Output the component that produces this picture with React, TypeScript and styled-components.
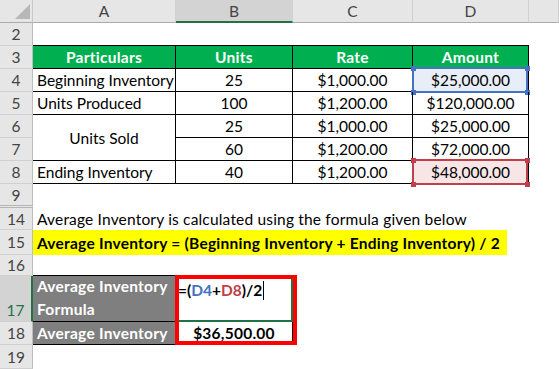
import React from 'react';
import styled, { createGlobalStyle } from 'styled-components';

const GlobalStyle = createGlobalStyle`
  html, body {
    margin: 0;
    padding: 0;
    background: #fff;
    overflow: hidden;
  }
  body {
    font-family: Lato, "Liberation Sans", sans-serif;
  }
`;

const GREEN = '#00b050';
const GREY = '#7f7f7f';
const EXCEL = '#217346';
const BLUE = '#4472c4';
const RED = '#c0404a';

// row heights of the visible sheet rows (header, 2..9, 14..19)
const ROWS = [23, 23, 23, 23, 23, 23, 23, 23, 24, 22, 25, 21, 46, 23, 24];

const Sheet = styled.div`
  display: grid;
  grid-template-columns: 33px 143px 117px 120px 116px 1fr;
  grid-template-rows: ${ROWS.map((h) => `${h}px`).join(' ')};
  width: 559px;
  height: 369px;
  font-size: 15.5px;
  color: #000;
`;

const Corner = styled.div`
  position: relative;
  box-sizing: border-box;
  background: #e6e6e6;
  border-right: 1px solid #c8c8c8;
  border-bottom: 1px solid #ababab;
`;

const CornerMark = styled.svg`
  position: absolute;
  right: 2px;
  bottom: 3px;
`;

const ColHead = styled.div<{ $active?: boolean }>`
  box-sizing: border-box;
  display: flex;
  align-items: center;
  justify-content: center;
  background: ${(p) => (p.$active ? '#d3d3d3' : '#e6e6e6')};
  color: #444;
  border-right: 1px solid #d0d0d0;
  border-bottom: ${(p) => (p.$active ? `2px solid ${EXCEL}` : '1px solid #ababab')};
`;

const RowHead = styled.div<{ $active?: boolean; $gap?: boolean }>`
  box-sizing: border-box;
  display: flex;
  justify-content: center;
  align-items: ${(p) => (p.$active ? 'flex-end' : 'center')};
  background: ${(p) => (p.$active ? '#d3d3d3' : '#e6e6e6')};
  color: ${(p) => (p.$active ? EXCEL : '#444')};
  line-height: 22px;
  border-right: ${(p) => (p.$active ? `2px solid ${EXCEL}` : '1px solid #bdbdbd')};
  border-bottom: ${(p) => (p.$gap ? '3px double #b5b5b5' : '1px solid #d0d0d0')};
`;

type CellProps = {
  $align?: 'left' | 'center';
  $bold?: boolean;
  $fill?: string;
  $ink?: string;
  $box?: boolean;
  $under?: string;
  $span?: number;
  $rows?: number;
};

const Cell = styled.div<CellProps>`
  position: relative;
  box-sizing: border-box;
  display: flex;
  align-items: center;
  justify-content: ${(p) => (p.$align === 'center' ? 'center' : 'flex-start')};
  padding: 0 4px;
  white-space: nowrap;
  grid-column: span ${(p) => p.$span || 1};
  grid-row: span ${(p) => p.$rows || 1};
  font-weight: ${(p) => (p.$bold ? 700 : 400)};
  letter-spacing: ${(p) => (p.$bold ? '0.25px' : 'normal')};
  background: ${(p) => p.$fill || 'transparent'};
  color: ${(p) => p.$ink || '#000'};
  border-right: ${(p) => (p.$box ? '1px solid #000' : 'none')};
  border-bottom: ${(p) => (p.$box ? '1px solid #000' : p.$under ? `1px solid ${p.$under}` : 'none')};
`;

const WrapCell = styled(Cell)`
  white-space: normal;
  align-items: flex-end;
  line-height: 23px;
`;

const ActiveCell = styled(Cell)`
  align-items: flex-start;
  padding: 5px 2px 0;
  letter-spacing: normal;
  border-right: 2px solid ${EXCEL};
  border-bottom: 2px solid ${EXCEL};
`;

const Note = styled.span`
  letter-spacing: 0.18px;
`;

const Highlight = styled.span`
  display: flex;
  align-items: center;
  align-self: stretch;
  background: #ffff00;
  font-weight: 700;
  letter-spacing: 0.25px;
  margin-left: -4px;
  padding: 0 7px 0 4px;
`;

const Picked = styled.div<{ $tone: string; $tint: string }>`
  position: absolute;
  top: -2px;
  left: -1px;
  right: 0;
  bottom: -2px;
  border: 2px solid ${(p) => p.$tone};
  background: ${(p) => p.$tint};
`;

const Handle = styled.i<{ $tone: string; $x: 'left' | 'right'; $y: 'top' | 'bottom' }>`
  position: absolute;
  width: 5px;
  height: 5px;
  background: ${(p) => p.$tone};
  ${(p) => p.$x}: -3.5px;
  ${(p) => p.$y}: -3.5px;
`;

const Value = styled.span`
  position: relative;
`;

const RedFrame = styled.div`
  position: absolute;
  left: -1px;
  top: -1px;
  width: 122px;
  height: 70px;
  box-sizing: border-box;
  border: 4px solid #ff0000;
  pointer-events: none;
  z-index: 2;
`;

const Ref = styled.span<{ $tone: string }>`
  color: ${(p) => p.$tone};
`;

const Caret = styled.span`
  display: inline-block;
  width: 1px;
  height: 19px;
  background: #000;
  margin-left: 1px;
  vertical-align: -4px;
`;

function Selected({ tone, tint, children }: { tone: string; tint: string; children: React.ReactNode }) {
  return (
    <>
      <Picked $tone={tone} $tint={tint}>
        <Handle $tone={tone} $x="left" $y="top" />
        <Handle $tone={tone} $x="right" $y="top" />
        <Handle $tone={tone} $x="left" $y="bottom" />
        <Handle $tone={tone} $x="right" $y="bottom" />
      </Picked>
      <Value>{children}</Value>
    </>
  );
}

const items = [
  { n: 4, name: 'Beginning Inventory', units: '25', rate: '$1,000.00', amount: '$25,000.00' },
  { n: 5, name: 'Units Produced', units: '100', rate: '$1,200.00', amount: '$120,000.00' },
];

export default function App() {
  return (
    <>
      <GlobalStyle />
      <Sheet>
        <Corner>
          <CornerMark width="15" height="15" viewBox="0 0 15 15">
            <polygon points="15,0 15,15 0,15" fill="#b7b7b7" />
          </CornerMark>
        </Corner>
        <ColHead>A</ColHead>
        <ColHead $active>B</ColHead>
        <ColHead>C</ColHead>
        <ColHead>D</ColHead>
        <ColHead />

        <RowHead>2</RowHead>
        <Cell $span={4} $under="#000" />
        <Cell />

        <RowHead>3</RowHead>
        {['Particulars', 'Units', 'Rate', 'Amount'].map((t) => (
          <Cell key={t} $box $bold $fill={GREEN} $ink="#fff" $align="center">
            {t}
          </Cell>
        ))}
        <Cell />

        {items.map((it) => (
          <React.Fragment key={it.n}>
            <RowHead>{it.n}</RowHead>
            <Cell $box>{it.name}</Cell>
            <Cell $box $align="center">{it.units}</Cell>
            <Cell $box $align="center">{it.rate}</Cell>
            <Cell $box $align="center">
              {it.n === 4 ? (
                <Selected tone={BLUE} tint="#e8eef8">{it.amount}</Selected>
              ) : (
                it.amount
              )}
            </Cell>
            <Cell />
          </React.Fragment>
        ))}

        <RowHead>6</RowHead>
        <Cell $box $align="center" $rows={2}>Units Sold</Cell>
        <Cell $box $align="center">25</Cell>
        <Cell $box $align="center">$1,000.00</Cell>
        <Cell $box $align="center">$25,000.00</Cell>
        <Cell />

        <RowHead>7</RowHead>
        <Cell $box $align="center">60</Cell>
        <Cell $box $align="center">$1,200.00</Cell>
        <Cell $box $align="center">$72,000.00</Cell>
        <Cell />

        <RowHead>8</RowHead>
        <Cell $box>Ending Inventory</Cell>
        <Cell $box $align="center">40</Cell>
        <Cell $box $align="center">$1,200.00</Cell>
        <Cell $box $align="center">
          <Selected tone={RED} tint="#f8e6e7">$48,000.00</Selected>
        </Cell>
        <Cell />

        <RowHead $gap>9</RowHead>
        <Cell $span={5} />

        <RowHead>14</RowHead>
        <Cell $span={5}>
          <Note>Average Inventory is calculated using the formula given below</Note>
        </Cell>

        <RowHead>15</RowHead>
        <Cell $span={5}>
          <Highlight>Average Inventory = (Beginning Inventory + Ending Inventory) / 2</Highlight>
        </Cell>

        <RowHead>16</RowHead>
        <Cell $span={2} $under="#000" />
        <Cell $span={3} />

        <RowHead $active>17</RowHead>
        <WrapCell $box $bold $fill={GREY} $ink="#fff">
          Average Inventory Formula
        </WrapCell>
        <ActiveCell $bold>
          <span>
            =(<Ref $tone={BLUE}>D4</Ref>+<Ref $tone={RED}>D8</Ref>)/2
            <Caret />
          </span>
          <RedFrame />
        </ActiveCell>
        <Cell $span={3} />

        <RowHead>18</RowHead>
        <Cell $box $bold $fill={GREY} $ink="#fff">Average Inventory</Cell>
        <Cell $box $bold $align="center">$36,500.00</Cell>
        <Cell $span={3} />

        <RowHead>19</RowHead>
        <Cell $span={5} />
      </Sheet>
    </>
  );
}
